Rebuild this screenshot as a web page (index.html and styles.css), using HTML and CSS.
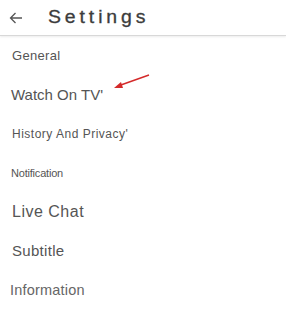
FILE: index.html
```html
<!DOCTYPE html>
<html lang="en">
<head>
	<meta charset="UTF-8">
	<title>Settings</title>
	<link rel="stylesheet" href="styles.css">
</head>
<body>
	<div class="page">
		<div class="top">
			<a class="back" href="javascript:;">
				<svg width="14" height="12" viewBox="0 0 14 12"><path d="M13 6H1.5M6.5 1L1.5 6l5 5" fill="none" stroke="#555" stroke-width="1.3"/></svg>
			</a>
			<h2>Settings</h2>
		</div>
		<ul class="list">
			<li class="s13">General</li>
			<li class="s15 mark">Watch On TV'
				<svg class="pointer" width="40" height="18" viewBox="0 0 40 18"><path d="M37 2L6 13" stroke="#d42a2a" stroke-width="1.4"/><path d="M2 15l7-6 2 6z" fill="#d42a2a"/></svg>
			</li>
			<li class="s12">History And Privacy'</li>
			<li class="s11">Notification</li>
			<li class="s16">Live Chat</li>
			<li class="s14">Subtitle</li>
			<li class="s14 light">Information</li>
		</ul>
	</div>
</body>
</html>
```
FILE: styles.css
```css
*{ margin:0; padding:0; }
li{ list-style:none; }
a{ text-decoration:none; }

body{ background:#fff; font-family:"Liberation Sans", Arial, sans-serif; color:#555; }
.page{ width:286px; }

.top{ height:35px; display:flex; align-items:center; border-bottom:1px solid #d8d8d8; box-shadow:0 1px 2px rgba(0,0,0,0.08); }
.top .back{ display:flex; width:14px; margin-left:9px; }
.top h2{ font-size:18px; font-weight:normal; color:#3c3c3c; letter-spacing:3.6px; margin-left:25px; transform:scaleX(1.08); transform-origin:left; -webkit-text-stroke:0.3px #3c3c3c; }

.list li{ height:39px; display:flex; align-items:center; padding-left:12px; }
.list .s11{ font-size:11px; letter-spacing:-0.2px; padding-left:11px; }
.list .s12{ font-size:12px; letter-spacing:0.5px; }
.list .s13{ font-size:13px; letter-spacing:0.3px; }
.list .s14{ font-size:15px; letter-spacing:0.3px; }
.list .s15{ font-size:15px; padding-left:11px; }
.list .s16{ font-size:16px; letter-spacing:0.5px; }
.list .light{ font-size:14.5px; color:#666; padding-left:10px; letter-spacing:0.2px; }

.list .mark{ position:relative; }
.list .pointer{ position:absolute; left:112px; top:-2px; }
```
